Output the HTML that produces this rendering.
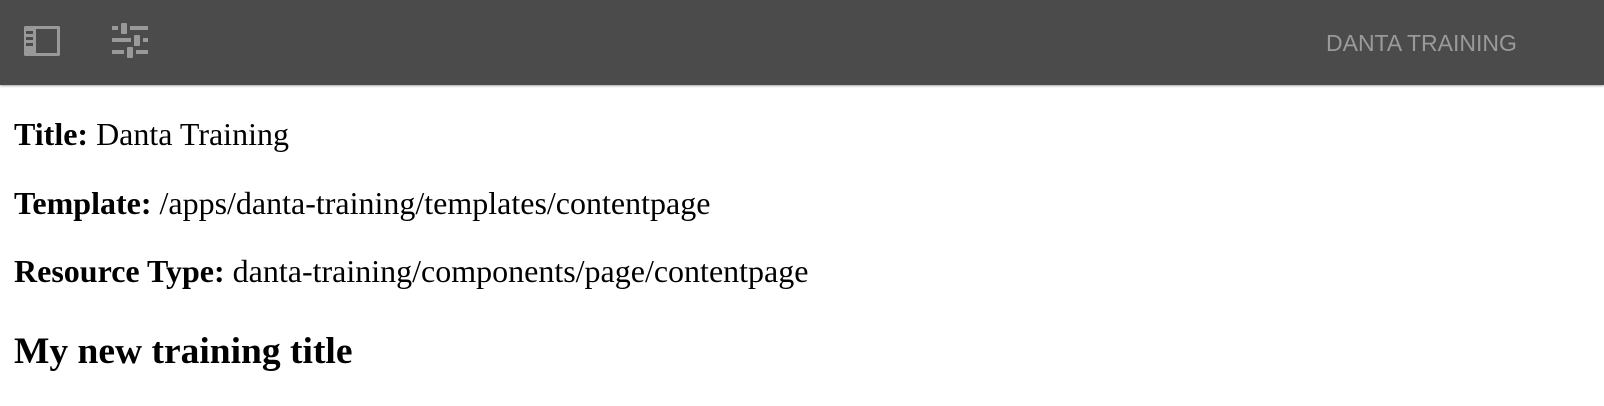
<!DOCTYPE html>
<html><head><style>
body{margin:0;width:1604px;height:406px;background:#fff;overflow:hidden;font-family:"Liberation Serif",serif;}
.bar{position:absolute;left:0;top:0;width:1604px;height:85px;background:#4b4b4b;box-shadow:0 1px 2px rgba(0,0,0,.35);}
.brand{position:absolute;left:1326px;top:30px;font:23px "Liberation Sans",sans-serif;color:#9a9a9a;white-space:nowrap;}
p{position:absolute;left:14px;margin:0;font-size:32px;color:#000;white-space:nowrap;line-height:1;}
h1{position:absolute;left:14px;margin:0;font-size:37.5px;font-weight:bold;line-height:1;white-space:nowrap;}
</style></head><body>
<div class="bar">
<svg style="position:absolute;left:24px;top:26px" width="36" height="30" viewBox="0 0 36 30">
<rect x="0" y="0" width="36" height="30" rx="1.5" fill="#999"/>
<rect x="12" y="3" width="21" height="24" fill="#4b4b4b"/>
<rect x="2" y="5" width="7" height="3" fill="#4b4b4b"/>
<rect x="2" y="11" width="7" height="3" fill="#4b4b4b"/>
<rect x="2" y="17" width="7" height="3" fill="#4b4b4b"/>
</svg>
<svg style="position:absolute;left:112px;top:23px" width="36" height="35" viewBox="0 0 36 35">
<g fill="#999">
<rect x="0" y="3" width="6" height="4"/><rect x="9" y="0" width="6" height="11" rx="1"/><rect x="18" y="3" width="18" height="4"/>
<rect x="0" y="15" width="19" height="4"/><rect x="22" y="12" width="6" height="11" rx="1"/><rect x="31" y="15" width="5" height="4"/>
<rect x="0" y="27" width="12" height="4"/><rect x="15" y="24" width="6" height="11" rx="1"/><rect x="24" y="27" width="12" height="4"/>
</g></svg>
<div class="brand">DANTA TRAINING</div>
</div>
<p style="top:118px"><b>Title:</b> Danta Training</p>
<p style="top:187px"><b>Template:</b> /apps/danta-training/templates/contentpage</p>
<p style="top:255px"><b>Resource Type:</b> danta-training/components/page/contentpage</p>
<h1 style="top:333px">My new training title</h1>
</body></html>
